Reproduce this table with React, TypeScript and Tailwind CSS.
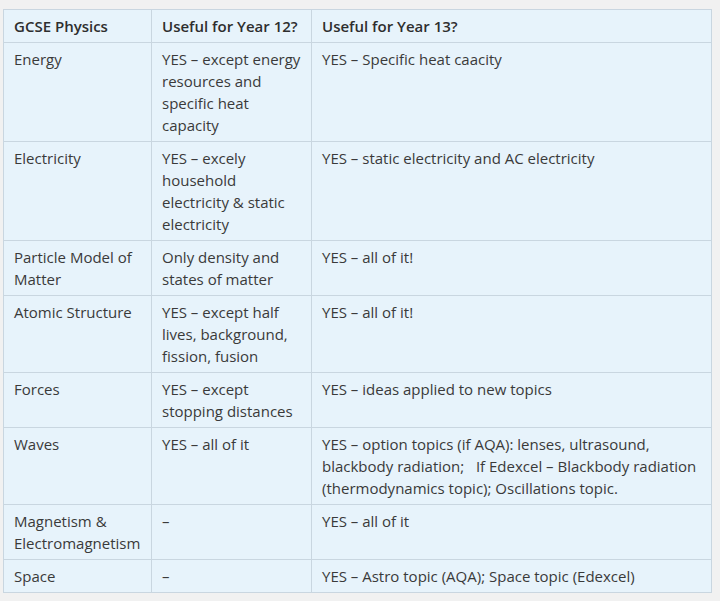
import React from "react";

const rows: [string, string, string][] = [
  ["Energy", "YES – except energy resources and specific heat capacity", "YES – Specific heat caacity"],
  ["Electricity", "YES – excely household electricity & static electricity", "YES – static electricity and AC electricity"],
  ["Particle Model of Matter", "Only density and states of matter", "YES – all of it!"],
  ["Atomic Structure", "YES – except half lives, background, fission, fusion", "YES – all of it!"],
  ["Forces", "YES – except stopping distances", "YES – ideas applied to new topics"],
  ["Waves", "YES – all of it", "YES – option topics (if AQA): lenses, ultrasound, blackbody radiation;\u00a0\u00a0\u00a0If Edexcel – Blackbody radiation (thermodynamics topic); Oscillations topic."],
  ["Magnetism & Electromagnetism", "–", "YES – all of it"],
  ["Space", "–", "YES – Astro topic (AQA); Space topic (Edexcel)"],
];

export default function App() {
  const cell = "border border-[#c9d6e0] pl-[10px] pr-[7px] py-[5px] align-top";
  return (
    <div className="w-[720px] h-[601px] bg-[#f1f1f1] pt-[9px] pl-[3px]" style={{ fontFamily: '"Open Sans", sans-serif' }}>
      <table className="border-collapse bg-[#e7f3fb] text-[15px] leading-[22px] text-[#3a3a3a] w-[708px] table-fixed">
        <colgroup>
          <col className="w-[148px]" />
          <col className="w-[160px]" />
          <col className="w-[400px]" />
        </colgroup>
        <thead>
          <tr>
            <th className={cell + " text-left font-semibold text-[#2e2e2e]"}>GCSE Physics</th>
            <th className={cell + " text-left font-semibold text-[#2e2e2e]"}>Useful for Year 12?</th>
            <th className={cell + " text-left font-semibold text-[#2e2e2e]"}>Useful for Year 13?</th>
          </tr>
        </thead>
        <tbody>
          {rows.map((r, i) => (
            <tr key={i}>
              <td className={cell}>{r[0]}</td>
              <td className={cell}>{r[1]}</td>
              <td className={cell}>{r[2]}</td>
            </tr>
          ))}
        </tbody>
      </table>
    </div>
  );
}
